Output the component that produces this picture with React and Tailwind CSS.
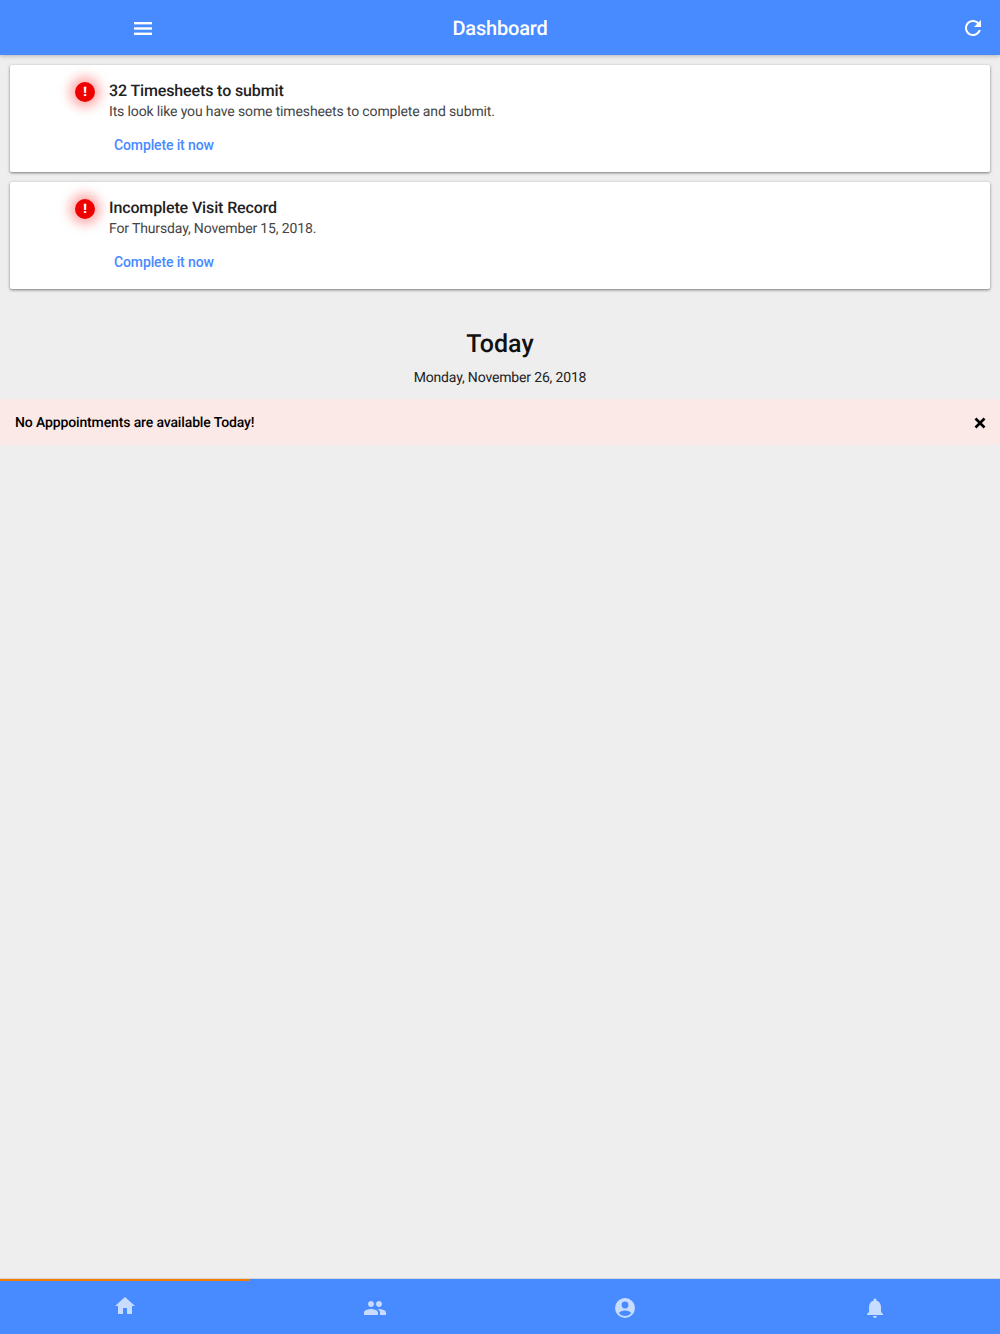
const ICONS = {
  home: 'M10 20v-6h4v6h5v-8h3L12 3 2 12h3v8z',
  people:
    'M16 11c1.66 0 2.99-1.34 2.99-3S17.66 5 16 5c-1.66 0-3 1.34-3 3s1.34 3 3 3zm-8 0c1.66 0 2.99-1.34 2.99-3S9.66 5 8 5C6.34 5 5 6.34 5 8s1.34 3 3 3zm0 2c-2.33 0-7 1.17-7 3.5V19h14v-2.5c0-2.33-4.67-3.5-7-3.5zm8 0c-.29 0-.62.02-.97.05 1.16.84 1.97 1.97 1.97 3.45V19h6v-2.5c0-2.33-4.67-3.5-7-3.5z',
  contact:
    'M12 2a10 10 0 1 0 0 20 10 10 0 0 0 0-20zm0 3.6a3.4 3.4 0 1 1 0 6.8 3.4 3.4 0 0 1 0-6.8zm0 14.4c-2.5 0-4.8-1.1-6.2-2.9C6.6 15.500 9.500 14.600 12 14.600s5.400.9 6.200 2.500C16.800 18.900 14.500 20 12 20z',
  bell: 'M12 22c1.1 0 2-.9 2-2h-4c0 1.1.89 2 2 2zm6-6v-5c0-3.07-1.64-5.64-4.5-6.32V4c0-.83-.67-1.5-1.5-1.5s-1.5.67-1.5 1.500v.68C7.63 5.360 6 7.920 6 11v5l-2 2v1h16v-1l-2-2z',
  refresh:
    'M17.65 6.35C16.2 4.9 14.21 4 12 4c-4.42 0-7.99 3.58-7.99 8s3.57 8 7.99 8c3.73 0 6.84-2.55 7.73-6h-2.08c-.82 2.33-3.04 4-5.65 4-3.31 0-6-2.69-6-6s2.69-6 6-6c1.66 0 3.14.69 4.22 1.78L13 11h7V4l-2.35 2.35z',
}

function Icon({ name, className }) {
  return (
    <svg viewBox="0 0 24 24" fill="currentColor" className={className}>
      <path d={ICONS[name]} />
    </svg>
  )
}

function NoticeCard({ title, text }) {
  return (
    <div className="h-[107px] bg-white rounded-[2px] shadow-[0_1px_3px_rgba(0,0,0,0.5)] flex pl-[65px] pt-[16px]">
      <div className="w-[20px] h-[20px] mt-[1px] mr-[14px] rounded-full bg-[#ee0000] shadow-[0_0_12px_5px_rgba(255,0,0,0.35)] flex items-center justify-center text-white text-[13px] font-black leading-none shrink-0">
        !
      </div>
      <div>
        <h2 className="text-[16px] leading-[19px] font-medium tracking-[-0.13px] text-[#222222]">{title}</h2>
        <p className="text-[14px] leading-[17px] mt-[4px] tracking-[-0.14px] text-[#444444]">{text}</p>
        <button className="block ml-[5px] mt-[16px] text-[14px] leading-[17px] font-medium tracking-[-0.13px] text-[#488aff]">
          Complete it now
        </button>
      </div>
    </div>
  )
}

function TabItem({ name, active, nudge }) {
  return (
    <div className="flex-1 relative flex items-center justify-center">
      {active && <div className="absolute top-0 left-0 right-0 h-[2px] bg-[#f57c00]" />}
      <Icon name={name} className={`w-[24px] h-[24px] text-[#c8dcff] ${nudge}`} />
    </div>
  )
}

export default function App() {
  return (
    <div className="h-[1334px] flex flex-col bg-[#eeeeee] font-['Roboto',sans-serif] [text-rendering:geometricPrecision] overflow-hidden">
      <header className="h-[55px] shrink-0 bg-[#488aff] shadow-[0_1px_4px_rgba(0,0,0,0.25)] flex items-center relative text-white">
        <div className="w-[286px] flex justify-center">
          <svg viewBox="0 0 18 13" className="w-[18px] h-[13px] mt-[1px]" fill="currentColor">
            <rect x="0" y="0" width="18" height="2.400" />
            <rect x="0" y="5.300" width="18" height="2.400" />
            <rect x="0" y="10.600" width="18" height="2.400" />
          </svg>
        </div>
        <h1 className="flex-1 text-center text-[20px] font-medium tracking-[-0.2px]">Dashboard</h1>
        <div className="w-[286px] flex justify-end pr-[15px]">
          <Icon name="refresh" className="w-[24px] h-[24px]" />
        </div>
      </header>

      <main className="flex-1">
        <div className="px-[10px] pt-[10px] flex flex-col gap-[10px]">
          <NoticeCard
            title="32 Timesheets to submit"
            text="Its look like you have some timesheets to complete and submit."
          />
          <NoticeCard title="Incomplete Visit Record" text="For Thursday, November 15, 2018." />
        </div>

        <div className="text-center mt-[40px] text-black">
          <h2 className="text-[25px] leading-[31px] font-medium text-[#111111]">Today</h2>
          <p className="text-[14px] leading-[17px] mt-[10px] tracking-[-0.16px] text-[#222222]">Monday, November 26, 2018</p>
        </div>

        <div className="h-[46px] mt-[12px] bg-[#fbe9e7] flex items-center justify-between pl-[15px] pr-[14px]">
          <span className="text-[14px] font-medium mt-[2px] tracking-[-0.135px] text-black">No Apppointments are available Today!</span>
          <svg viewBox="0 0 12 12" className="w-[12px] h-[12px] mt-[2px]" stroke="black" strokeWidth="2.600" fill="none">
            <path d="M1.500 1.500l9 9M10.500 1.500l-9 9" />
          </svg>
        </div>
      </main>

      <nav className="h-[56px] shrink-0 bg-[#488aff] border-t border-[#d5d5d5] flex">
        <TabItem name="home" active nudge="-translate-y-[1px]" />
        <TabItem name="people" nudge="translate-y-[1px]" />
        <TabItem name="contact" nudge="translate-y-[1px]" />
        <TabItem name="bell" nudge="translate-y-[1px]" />
      </nav>
    </div>
  )
}
